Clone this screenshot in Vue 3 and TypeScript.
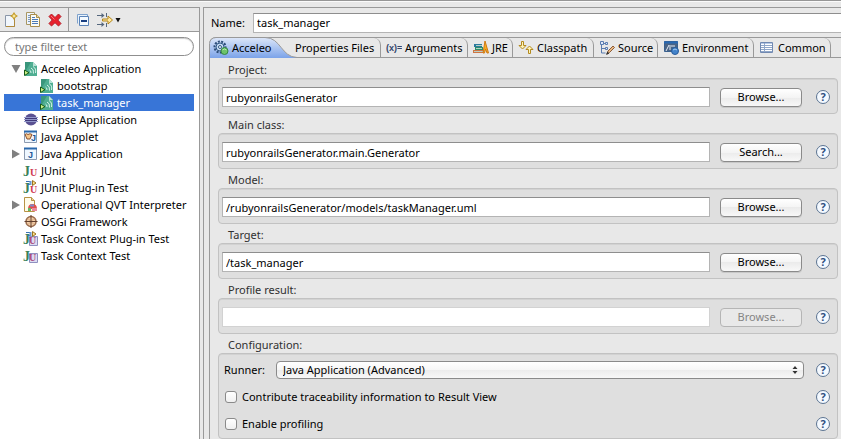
<script setup lang="ts">
import { ref } from 'vue'

interface TreeItem {
  label: string
  icon: string
  level: number
  twisty?: 'open' | 'closed'
}

interface Field {
  id: string
  label: string
  value: string
  action: string
  disabled?: boolean
}

const tree: TreeItem[] = [
  { label: 'Acceleo Application', icon: 'acceleo', level: 1, twisty: 'open' },
  { label: 'bootstrap', icon: 'acceleo', level: 2 },
  { label: 'task_manager', icon: 'acceleo', level: 2 },
  { label: 'Eclipse Application', icon: 'eclipse', level: 1 },
  { label: 'Java Applet', icon: 'applet', level: 1 },
  { label: 'Java Application', icon: 'java', level: 1, twisty: 'closed' },
  { label: 'JUnit', icon: 'junit', level: 1 },
  { label: 'JUnit Plug-in Test', icon: 'junit-plugin', level: 1 },
  { label: 'Operational QVT Interpreter', icon: 'qvt', level: 1, twisty: 'closed' },
  { label: 'OSGi Framework', icon: 'osgi', level: 1 },
  { label: 'Task Context Plug-in Test', icon: 'task-plugin', level: 1 },
  { label: 'Task Context Test', icon: 'task', level: 1 },
]

const tabs = [
  { id: 'acceleo', label: 'Acceleo' },
  { id: 'properties', label: 'Properties Files' },
  { id: 'arguments', label: 'Arguments' },
  { id: 'jre', label: 'JRE' },
  { id: 'classpath', label: 'Classpath' },
  { id: 'source', label: 'Source' },
  { id: 'environment', label: 'Environment' },
  { id: 'common', label: 'Common' },
]

const fields = ref<Field[]>([
  { id: 'project', label: 'Project:', value: 'rubyonrailsGenerator', action: 'Browse...' },
  { id: 'main-class', label: 'Main class:', value: 'rubyonrailsGenerator.main.Generator', action: 'Search...' },
  { id: 'model', label: 'Model:', value: '/rubyonrailsGenerator/models/taskManager.uml', action: 'Browse...' },
  { id: 'target', label: 'Target:', value: '/task_manager', action: 'Browse...' },
  { id: 'profile', label: 'Profile result:', value: '', action: 'Browse...', disabled: true },
])

const selected = ref('task_manager')
const filter = ref('')
const configName = ref('task_manager')
const runner = ref('Java Application (Advanced)')
const traceability = ref(false)
const profiling = ref(false)
</script>

<template>
  <div class="dialog">
    <aside class="sidebar">
      <div class="toolbar">
        <button class="tool" aria-label="New">
          <svg width="16" height="16" viewBox="0 0 16 16">
            <path d="M2.500 3.500h9v11h-9z" fill="#f1f6fc" stroke="#8a96a8" />
            <path d="M3 14.500h8.500V7" fill="none" stroke="#b08a3c" />
            <path d="M11 0l1.600 2.600L15 4l-2.400 1.400L11 8 9.400 5.400 7 4l2.400-1.400z" fill="#c49a28" />
            <path d="M11 2l.8 1.500L13.500 4l-1.700.6L11 6.200l-.8-1.600L8.700 4l1.500-.5z" fill="#fff4b0" />
          </svg>
        </button>
        <button class="tool" aria-label="Duplicate">
          <svg width="16" height="16" viewBox="0 0 16 16">
            <path d="M1.500.5h8v12h-8z" fill="#eef4fb" stroke="#a99762" />
            <path d="M3 3.500h2M3 5.500h2M3 7.500h2M3 9.500h2" stroke="#7b98bd" />
            <path d="M5.500 2.500h6l3 3v9h-9z" fill="#fbfbf4" stroke="#a98d4c" />
            <path d="M11.500 2.500v3h3" fill="#ead9a0" stroke="#a98d4c" />
            <path d="M7 5.500h3M7 7.500h6M7 9.500h6M7 11.500h6" stroke="#4b7ab8" />
          </svg>
        </button>
        <button class="tool" aria-label="Delete">
          <svg width="16" height="16" viewBox="0 0 16 16">
            <path d="M4.500 2L8 5.500 11.500 2 14 4.500 10.800 8 14 11.500 11.500 14 8 10.700 4.500 14 2 11.500 5.200 8 2 4.500z" fill="#e8202c" stroke="#b5202a" stroke-linejoin="round" />
            <path d="M4 4l3.500 3.500" stroke="#f7777c" />
          </svg>
        </button>
        <span class="tool-separator"></span>
        <button class="tool" aria-label="Collapse all">
          <svg width="16" height="16" viewBox="0 0 16 16">
            <path d="M2.500 11.500v-9h10v2" fill="#eaf3fb" stroke="#7fa2cc" />
            <path d="M4.500 4.500h9v9h-9z" fill="#f4faff" stroke="#5a83b8" />
            <path d="M6 9h6" stroke="#183f82" stroke-width="2" />
          </svg>
        </button>
        <button class="tool tool-menu" aria-label="Filter launch configurations">
          <svg width="24" height="16" viewBox="0 0 24 16">
            <path d="M0 3.500h6M0 12.500h6" stroke="#55677d" />
            <path d="M4.500 1v5l3-2.500zM4.500 10v5l3-2.500z" fill="#55677d" />
            <path d="M9.500 1v4M9.500 11v4" stroke="#55677d" />
            <path d="M5.500 7h5.500V4l4.500 4-4.500 4V9H5.500z" fill="#ffe9a4" stroke="#b58619" />
            <path d="M18.500 6h5L21 10.500z" fill="#111" />
          </svg>
        </button>
      </div>
      <div class="tree-pane">
        <input v-model="filter" class="filter" type="search" placeholder="type filter text" aria-label="Filter configurations" />
        <ul class="tree" role="tree" aria-label="Launch configurations">
          <li
            v-for="item in tree"
            :key="item.label"
            class="node"
            :class="[`level-${item.level}`, { selected: item.label === selected }]"
            role="treeitem"
            :aria-selected="item.label === selected"
            @click="selected = item.label"
          >
            <span class="twisty">
              <svg v-if="item.twisty === 'open'" width="10" height="10" viewBox="0 0 10 10"><path d="M.5 1h9L5 9z" fill="#808080" /></svg>
              <svg v-else-if="item.twisty === 'closed'" width="10" height="10" viewBox="0 0 10 10"><path d="M1 .5v9L9 5z" fill="#808080" /></svg>
            </span>
            <svg class="node-icon" width="15" height="15" viewBox="0 0 15 15">
              <g v-if="item.icon === 'acceleo'">
                <path d="M2 1h8l4 4v10H2z" fill="#4fae92" />
                <path d="M2 1h6L2 11z" fill="#3a967c" />
                <path d="M10 1v4h4z" fill="#b9e2d6" />
                <path d="M6.500 9q1.500.500 1.500 3M8 7q3 1 2.500 5.500M10 5.500q3.500 2 2.500 6.500" fill="none" stroke="#d9f3eb" />
                <path d="M1.500 9v5.500L6 11.700z" fill="#c9ef86" stroke="#175a18" />
              </g>
              <g v-else-if="item.icon === 'eclipse'">
                <circle cx="8" cy="7.500" r="6" fill="#5a5192" />
                <path d="M1 5.500h14M1 7.500h14M1 9.500h14" stroke="#9096c8" />
                <path d="M2 6.500h12M2 8.500h12" stroke="#41397a" />
              </g>
              <g v-else-if="item.icon === 'applet' || item.icon === 'java'">
                <path d="M1.500 2.500h12v11h-12z" fill="#eef7ff" stroke="#8c9bb0" />
                <path d="M1 2.500h13" stroke="#2b69ad" stroke-width="2" />
                <text v-if="item.icon === 'java'" x="5" y="12" class="glyph-sans" fill="#1d5796">J</text>
                <template v-else>
                  <path d="M2 5.500q1.500-1.500 3 0 2-1.500 4 0L7 10H4z" fill="#f6c78b" stroke="#8d5230" />
                  <text x="8" y="12" class="glyph-sans" fill="#1d5796">J</text>
                </template>
              </g>
              <g v-else-if="item.icon === 'qvt'">
                <path d="M1.500.5h7l3 3v11h-10z" fill="#fffbe9" stroke="#b79243" />
                <path d="M8.500.5v3h3" fill="#e8d096" stroke="#b79243" />
                <path d="M5 12q0-5 4.500-5t4.500 5z" fill="#e1504d" />
                <path d="M7 7.500h4v2H7z" fill="#7c8bc9" />
                <path d="M5 11h3v3H5z" fill="#62b963" />
                <path d="M9 11h5v3H9z" fill="#e98aa0" />
              </g>
              <g v-else-if="item.icon === 'osgi'">
                <circle cx="8" cy="7.500" r="5" fill="#f2cfaa" stroke="#9a6b4c" stroke-width="1.500" />
                <path d="M5 4.500l6 6M11 4.500l-6 6" stroke="#d9a57c" />
                <path d="M8 1v13M1.500 7.500h13" stroke="#62402f" />
              </g>
              <g v-else>
                <path v-if="item.icon.startsWith('task')" d="M6.500 5.500h8v9h-8z" fill="#dcdcf2" stroke="#8f90c0" />
                <text x="0" y="13" class="glyph-serif" fill="#3b8259">J</text>
                <text v-if="item.icon.startsWith('task')" x="6" y="13" class="glyph-small" fill="#a9497c">U</text>
                <text v-else x="7" y="13" class="glyph-small" fill="#cf3852">U</text>
                <template v-if="item.icon.endsWith('plugin')">
                  <path d="M3 1.500h4M4 4.500h3" stroke="#3972b2" />
                  <path d="M6.500 1h2v4h-2z" fill="#6f9bd0" />
                  <path d="M9.500.5l3.500 2.500-3.500 2.500z" fill="#ffdf84" stroke="#9a7425" />
                </template>
              </g>
            </svg>
            <span class="node-label">{{ item.label }}</span>
          </li>
        </ul>
      </div>
    </aside>

    <main class="editor">
      <div class="name-row">
        <label for="config-name">Name:</label>
        <input id="config-name" v-model="configName" class="text-input name-input" type="text" />
      </div>

      <div class="folder">
        <div class="tabs" role="tablist">
          <button
            v-for="tab in tabs"
            :key="tab.id"
            class="tab"
            :class="`tab-${tab.id}`"
            role="tab"
            :aria-selected="tab.id === 'acceleo'"
          >
            <svg v-if="tab.id === 'acceleo'" class="tab-shape" width="90" height="21" viewBox="0 0 90 21">
              <defs>
                <linearGradient id="tab-fill" x1="0" y1="0" x2="0" y2="1">
                  <stop offset="0" stop-color="#dde7f9" />
                  <stop offset="1" stop-color="#7ba3e9" />
                </linearGradient>
              </defs>
              <path d="M.5 21V6.500Q1 1 7 .5H56C72 .5 72 20 88 20.500V21z" fill="url(#tab-fill)" />
              <path d="M.5 21V6.500Q1 1 7 .5H56C72 .5 72 20 88 20.500" fill="none" stroke="#999" />
            </svg>
            <svg v-if="tab.id !== 'properties'" class="tab-icon" width="16" height="16" viewBox="0 0 16 16">
              <g v-if="tab.id === 'acceleo'">
                <circle cx="7" cy="7" r="5.500" fill="none" stroke="#2d4d78" stroke-width="2" stroke-dasharray="2 1.300" />
                <circle cx="7" cy="7" r="4" fill="#c5daf1" stroke="#315987" />
                <circle cx="7" cy="7" r="1.500" fill="#fff" stroke="#315987" />
                <circle cx="11.500" cy="11" r="3.500" fill="#6cc36a" stroke="#358744" />
                <path d="M9.500 10q2-2 4 0" fill="none" stroke="#b6e7ab" />
              </g>
              <text v-else-if="tab.id === 'arguments'" x="0" y="11" class="glyph-args" fill="#33476c">(x)=</text>
              <g v-else-if="tab.id === 'jre'">
                <path d="M1 4h8v3H1z" fill="#2a7a9d" />
                <path d="M2 7h8v3H2z" fill="#2c8f6b" />
                <path d="M0 10h11v3H0z" fill="#cf7542" />
                <path d="M3 5.500h6M3 8.500h6M1 11.500h9" stroke="#b9d0c4" />
                <path d="M10 13l2-12 3.500 12h-1.500l-1.500-4-1 4z" fill="#f6ae22" stroke="#d07a14" />
              </g>
              <g v-else-if="tab.id === 'classpath'" fill="#fff5b8" stroke="#b48a20">
                <path d="M3.500 1.500h2v4h2.500L4.500 9 1 5.500h2.500z" />
                <path d="M10.500 13.500h2v-4h2.500L11.500 6 8 9.500h2.500z" />
              </g>
              <g v-else-if="tab.id === 'source'">
                <path d="M2.500 3v10h4M2.500 8.500h4M3 3.500h4" fill="none" stroke="#5b7cb0" />
                <path d="M1.500 1.500h3v3h-3zM6.500 2.500h2v2h-2zM6.500 7.500h2v2h-2z" fill="#dfe9fa" stroke="#5b7cb0" />
                <path d="M8 14l1-3 5-5 1.500 1.500-5 5z" fill="#e9ba83" stroke="#8d5b38" />
                <path d="M7 15l1.300-3.500 2 2z" fill="#303030" />
              </g>
              <g v-else-if="tab.id === 'environment'">
                <path d="M1.500 1.500h13v10h-13z" fill="#4a6485" stroke="#39608f" />
                <path d="M1 2.500h14" stroke="#2869b3" stroke-width="2" />
                <path d="M3 11l3-6M7 5v5M8 6h4" stroke="#e6eef8" />
                <circle cx="12" cy="11" r="3.500" fill="#4383ca" stroke="#285c9c" />
                <path d="M10 10q2-2 4 0" fill="none" stroke="#a6cdf2" />
              </g>
              <g v-else>
                <path d="M1.500 2.500h12v10h-12z" fill="#fff" stroke="#7189b1" />
                <path d="M2 3.500h11" stroke="#b6cae8" />
                <path d="M2 5.500h11M2 7.500h11M2 9.500h11M2 11.500h11M5.500 3v9" stroke="#90a7c9" />
              </g>
            </svg>
            <span class="tab-label">{{ tab.label }}</span>
          </button>
        </div>

        <div class="page">
          <section v-for="field in fields" :key="field.id" class="group">
            <label class="group-title" :for="field.id">{{ field.label }}</label>
            <div class="group-box field-box">
              <input :id="field.id" v-model="field.value" class="text-input" type="text" :disabled="field.disabled" />
              <button class="push" :disabled="field.disabled">{{ field.action }}</button>
              <button class="help" :aria-label="`Help: ${field.label}`">?</button>
            </div>
          </section>

          <section class="group">
            <h2 class="group-title">Configuration:</h2>
            <div class="group-box config-box">
              <div class="config-row">
                <label class="runner-label" for="runner">Runner:</label>
                <span class="select-wrap">
                  <select id="runner" v-model="runner" class="runner">
                    <option>Java Application (Advanced)</option>
                  </select>
                  <svg class="select-arrows" width="6" height="8" viewBox="0 0 6 8"><path d="M3 0l2.500 3h-5zM3 8l2.500-3h-5z" fill="#333" /></svg>
                </span>
                <button class="help" aria-label="Help: Runner">?</button>
              </div>
              <div class="config-row">
                <label class="check"><input v-model="traceability" type="checkbox" />Contribute traceability information to Result View</label>
                <button class="help" aria-label="Help: Traceability">?</button>
              </div>
              <div class="config-row">
                <label class="check"><input v-model="profiling" type="checkbox" />Enable profiling</label>
                <button class="help" aria-label="Help: Profiling">?</button>
              </div>
            </div>
          </section>
        </div>
      </div>
    </main>
  </div>
</template>

<style>
body {
  background: #e8e8e8;
}
</style>

<style scoped>
.dialog,
.dialog * {
  box-sizing: border-box;
}
.dialog {
  display: flex;
  gap: 3px;
  min-height: 100vh;
  padding-top: 6px;
  border-top: 1px solid #969696;
  box-shadow: inset 0 1px #fafafa;
  background: #e8e8e8;
  color: #000;
  font-family: 'Noto Sans', 'Open Sans', sans-serif;
  font-size: 11px;
  line-height: 17px;
  overflow: hidden;
}
button,
input,
select {
  margin: 0;
  color: inherit;
  font: inherit;
}
svg {
  display: block;
  flex: none;
}

/* Configuration list */
.sidebar {
  display: flex;
  flex: 0 0 200px;
  flex-direction: column;
  border: solid #999;
  border-width: 1px 1px 0 0;
}
.toolbar {
  display: flex;
  align-items: center;
  height: 24px;
  padding-left: 3px;
  border-bottom: 1px solid #999;
}
.tool {
  width: 16px;
  height: 16px;
  margin-right: 6px;
  padding: 0;
  border: 0;
  background: none;
}
.tool-menu {
  width: 24px;
}
.tool-separator {
  align-self: stretch;
  width: 1px;
  margin-right: 6px;
  margin-left: -1px;
  background: #999;
}
.tree-pane {
  flex: 1;
  padding: 5px;
  padding-left: 4px;
  background: #fff;
}
.filter {
  display: block;
  width: 100%;
  height: 19px;
  padding: 0 10px;
  border: 1px solid #8f8f8f;
  border-radius: 10px;
  outline: 0;
  background: #fff;
  box-shadow: inset 0 1px 1px #ccc;
  appearance: none;
}
.filter::placeholder {
  color: #777;
  opacity: 1;
}
.tree {
  margin: 4px 0 0;
  padding: 0;
  list-style: none;
}
.node {
  display: flex;
  align-items: center;
  height: 17px;
  white-space: nowrap;
}
.level-1 {
  padding-left: 7px;
}
.level-2 {
  padding-left: 23px;
}
.selected {
  background: #3875d7;
  color: #fff;
}
.twisty {
  flex: none;
  width: 12px;
}
.node-icon {
  margin-right: 3px;
}
.glyph-sans {
  font: bold 9px 'Liberation Sans', sans-serif;
}
.glyph-serif {
  font: bold 14px 'Liberation Serif', serif;
}
.glyph-small {
  font: bold 10px 'Liberation Serif', serif;
}
.glyph-args {
  font: bold 9px 'Liberation Sans', sans-serif;
}

/* Editor */
.editor {
  display: flex;
  flex: 1;
  flex-direction: column;
  min-width: 0;
  border: solid #999;
  border-width: 1px 0 0 1px;
}
.name-row {
  display: flex;
  align-items: center;
  height: 29px;
  padding: 4px 0 4px 7px;
}
.name-row label {
  width: 42px;
}
.text-input {
  flex: 1;
  min-width: 0;
  height: 20px;
  padding: 0 3px;
  border: 1px solid #b4b4b4;
  border-top-color: #8e8e8e;
  border-radius: 0;
  outline: 0;
  background: #fff;
}
.text-input:disabled {
  border-color: #d2d2d2;
}
.name-input {
  border-right: 0;
}
.folder {
  display: flex;
  flex: 1;
  flex-direction: column;
  margin-left: 5px;
}
.tabs {
  display: flex;
  height: 21px;
  border: solid #999;
  border-width: 1px 0;
  border-top-left-radius: 7px;
}
.tab {
  display: flex;
  align-items: center;
  gap: 3px;
  padding: 0 0 0 5px;
  border: solid #999;
  border-width: 0 1px 0 0;
  border-top-right-radius: 7px;
  background: none;
  white-space: nowrap;
}
.tab-icon,
.tab-label {
  position: relative;
}
.tab-shape {
  position: absolute;
  top: -1px;
  left: 0;
}
.tab-acceleo {
  position: relative;
  width: 85px;
  padding-left: 4px;
  border: 0;
}
.tab-properties {
  width: 87px;
  padding-left: 1px;
}
.tab-arguments {
  width: 87px;
}
.tab-jre {
  width: 45px;
}
.tab-classpath {
  width: 81px;
}
.tab-source {
  width: 64px;
}
.tab-environment {
  width: 96px;
}
.tab-common {
  width: 77px;
}
.page {
  flex: 1;
  padding: 1px 3px 1px 8px;
  border-left: 1px solid #999;
}
.group-title {
  display: block;
  height: 19px;
  margin: 0;
  padding: 2px 0 0 10px;
  color: #303030;
  font-size: 11px;
  font-weight: normal;
  line-height: 17px;
}
.group-box {
  border: 1px solid #c2c2c2;
  border-radius: 4px;
  background: #dfdfdf;
  box-shadow: inset 0 1px #d2d2d2;
}
.field-box {
  display: flex;
  align-items: center;
  height: 36px;
  padding: 8px 7px 6px 3px;
}
.push {
  width: 82px;
  height: 19px;
  margin: 0 14px 0 10px;
  padding: 0;
  border: 1px solid #8a8a8a;
  border-radius: 4px;
  background: linear-gradient(#fff, #f4f4f4 50%, #ebebeb 50%, #f8f8f8);
  box-shadow: 0 1px #c8c8c8;
  line-height: 16px;
}
.push:disabled {
  border-color: #b5b5b5;
  background: #e9e9e9;
  box-shadow: none;
  color: #858585;
}
.help {
  flex: none;
  width: 14px;
  height: 14px;
  padding: 0;
  border: 1px solid #5b7391;
  border-radius: 50%;
  background: #f4f9ff;
  color: #2f4f80;
  font-weight: bold;
  line-height: 12px;
  text-align: center;
}
.config-box {
  padding: 2px 7px 1px 5px;
}
.config-row {
  display: flex;
  align-items: center;
  height: 27px;
}
.runner-label {
  width: 52px;
}
.select-wrap {
  position: relative;
  display: flex;
  flex: 1;
  margin-right: 12px;
}
.runner {
  width: 100%;
  height: 18px;
  padding: 0 20px 0 6px;
  border: 1px solid #8a8a8a;
  border-radius: 4px;
  background: linear-gradient(#fff, #f6f6f6 50%, #ececec 50%, #f8f8f8);
  line-height: 16px;
  appearance: none;
}
.select-arrows {
  position: absolute;
  top: 5px;
  right: 6px;
  pointer-events: none;
}
.check {
  display: flex;
  flex: 1;
  align-items: center;
  gap: 5px;
}
.check input {
  width: 12px;
  height: 12px;
  margin-left: 1px;
  border: 1px solid #8a8a8a;
  border-radius: 3px;
  background: linear-gradient(#fff, #f0f0f0);
  appearance: none;
}
.check input:checked {
  background: #3875d7;
}
</style>
